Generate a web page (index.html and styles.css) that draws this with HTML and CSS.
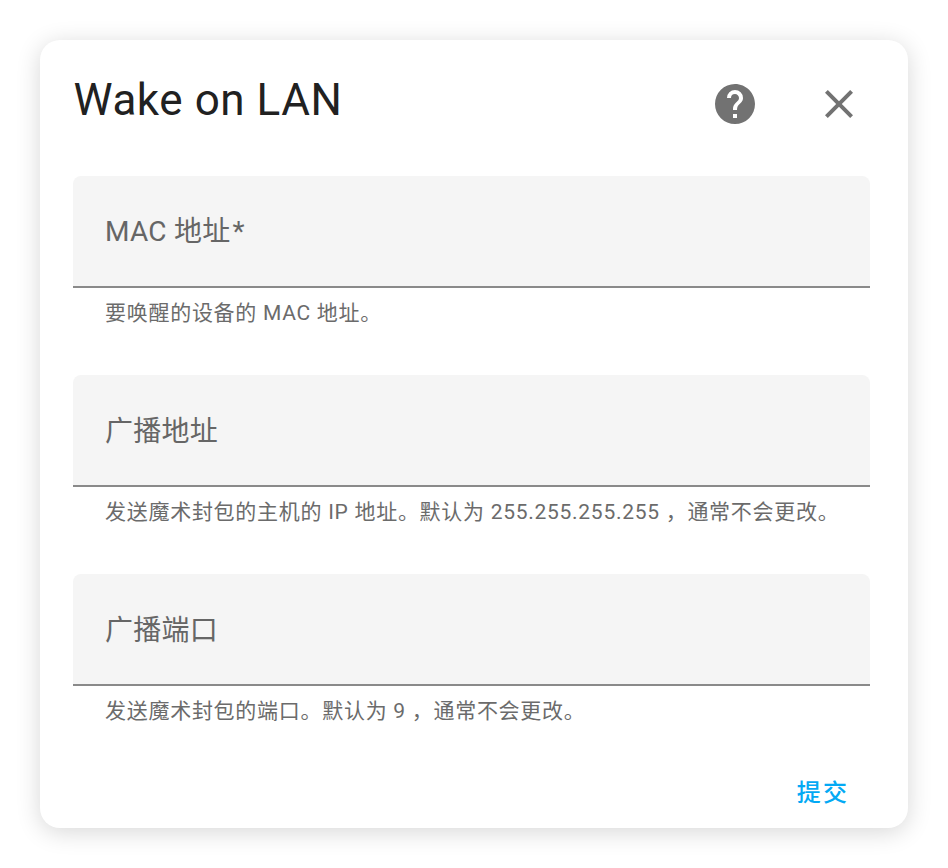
FILE: index.html
```html
<!DOCTYPE html>
<html lang="zh-CN">
<head>
<meta charset="utf-8">
<title>Wake on LAN</title>
<link rel="stylesheet" href="styles.css">
</head>
<body>
<main class="dialog">
  <header class="header">
    <h1 class="title">Wake on LAN</h1>
    <div class="actions">
      <button class="icon-button" aria-label="Help"><svg viewBox="0 0 24 24"><path d="M15.07,11.25L14.17,12.17C13.45,12.89 13,13.5 13,15H11V14.5C11,13.39 11.45,12.39 12.17,11.67L13.41,10.41C13.78,10.05 14,9.55 14,9C14,7.89 13.1,7 12,7A2,2 0 0,0 10,9H8A4,4 0 0,1 12,5A4,4 0 0,1 16,9C16,9.88 15.64,10.67 15.07,11.25M13,19H11V17H13M12,2A10,10 0 0,0 2,12A10,10 0 0,0 12,22A10,10 0 0,0 22,12C22,6.47 17.5,2 12,2Z"/></svg></button>
      <button class="icon-button" aria-label="Close"><svg viewBox="0 0 24 24"><path d="M19,6.41L17.59,5L12,10.59L6.41,5L5,6.41L10.59,12L5,17.59L6.41,19L12,13.41L17.59,19L19,17.59L13.41,12L19,6.41Z"/></svg></button>
    </div>
  </header>
  <form class="form">
    <div class="field">
      <div class="input"><span class="label">MAC 地址<span class="required">*</span></span></div>
      <p class="helper">要唤醒的设备的 MAC 地址。</p>
    </div>
    <div class="field">
      <div class="input input-cjk"><span class="label">广播地址</span></div>
      <p class="helper">发送魔术封包的主机的 IP 地址。默认为 255.255.255.255 ，通常不会更改。</p>
    </div>
    <div class="field">
      <div class="input input-cjk"><span class="label">广播端口</span></div>
      <p class="helper">发送魔术封包的端口。默认为 9 ，通常不会更改。</p>
    </div>
  </form>
  <footer class="footer"><button class="submit">提交</button></footer>
</main>
</body>
</html>
```
FILE: styles.css
```css
* { box-sizing: border-box; }
body {
  margin: 0;
  padding: 40px;
  background: #fff;
  font-family: Roboto, "Noto Sans CJK SC", sans-serif;
  text-spacing-trim: space-all;
}
button { border: 0; padding: 0; background: none; font-family: inherit; }
.dialog {
  width: 868px;
  height: 788px;
  border-radius: 20px;
  background: #fff;
  box-shadow: 0 4px 24px rgba(0, 0, 0, .16);
}
.header {
  height: 136px;
  padding: 32px 45px 0 33.5px;
  display: flex;
  justify-content: space-between;
}
.title {
  margin: 0;
  font-size: 44px;
  line-height: 56px;
  font-weight: 400;
  letter-spacing: .55px;
  color: #212121;
}
.actions { display: flex; gap: 56px; padding-top: 8px; }
.icon-button { width: 48px; height: 48px; }
.icon-button svg { display: block; width: 48px; height: 48px; fill: #727272; }
.form { padding: 0 38px 0 33px; }
.field { height: 199px; }
.input {
  height: 112px;
  padding: 2px 32px 0;
  display: flex;
  align-items: center;
  background: #f5f5f5;
  border-bottom: 2px solid #8a8a8a;
  border-radius: 8px 8px 0 0;
}
.input-cjk { padding-top: 4px; }
.label { font-size: 28px; line-height: 40px; letter-spacing: .2625px; color: #666; white-space: nowrap; }
.required { margin-left: 2px; }
.helper {
  margin: 9px 0 0;
  padding: 0 32px;
  font-size: 21px;
  line-height: 32px;
  letter-spacing: .72px;
  color: #6b6b6b;
  white-space: nowrap;
}
.footer { display: flex; justify-content: flex-end; padding: 2px 59px 0; }
.submit { font-size: 24px; line-height: 36px; font-weight: 500; letter-spacing: 2.1px; color: #03a9f4; }
```
